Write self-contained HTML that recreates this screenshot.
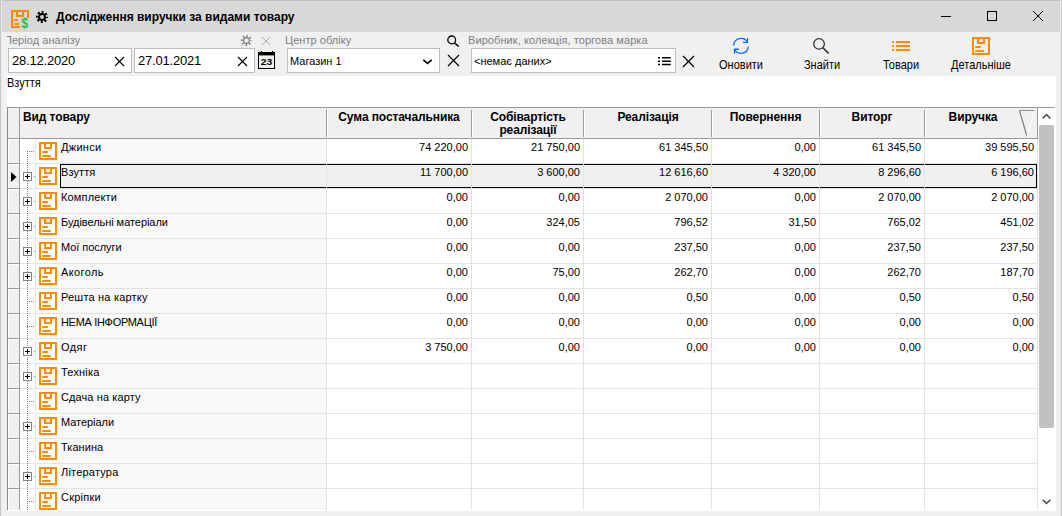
<!DOCTYPE html>
<html lang="uk"><head><meta charset="utf-8"><title>Дослідження виручки за видами товару</title>
<style>
*{box-sizing:border-box;margin:0;padding:0}
html,body{width:1062px;height:516px;overflow:hidden;background:#f0f0f0;font-family:"Liberation Sans",sans-serif;color:#000;font-size:11px}
div,span,svg{position:absolute}
#title{left:0;top:0;width:1062px;height:32px;background:#d8d8d8;border-top:1px solid #c2c2c2}
.eb{top:0;width:1px;height:516px}
#title .t{left:56px;top:9px;font:bold 12px "Liberation Sans",sans-serif;white-space:nowrap}
.lbl{font-size:11px;color:#7f7f7f;white-space:nowrap;top:34px;letter-spacing:.05px}
.inp{top:48px;height:25px;background:#fff;border:1px solid #bebebe}
.inp span{left:3px;top:4px;font-size:13px;white-space:nowrap;letter-spacing:-.2px}
.inp span.s{left:2px;top:6px;font-size:11px;letter-spacing:0}
.btn{top:59px;font-size:11px;white-space:nowrap;transform:translateX(-50%) scaleY(1.12)}
#panel{left:7px;top:76px;width:1049px;height:435px;background:#fff}
#cur{left:7px;top:77px;font-size:11px;transform:scaleY(1.12);transform-origin:0 50%}
#grid{left:7px;top:107px;width:1031px;height:403px;overflow:hidden;background:#fff}
#gt{left:7px;top:107px;width:1048px;height:1px;background:#9a9a9a}
#clip{left:0;top:0;width:1062px;height:510px;overflow:hidden}
#gl{left:7px;top:107px;width:1px;height:403px;background:#8c8c8c}
#hdr{left:8px;top:108px;width:1030px;height:31px;background:#f0f0f0;border-bottom:1px solid #9a9a9a;border-right:1px solid #9a9a9a}
.hc{top:111px;font:bold 12px "Liberation Sans",sans-serif;text-align:center;line-height:13px;letter-spacing:-.1px;white-space:nowrap;transform:translateX(-50%)}
.hs{top:110px;width:2px;height:27px;border-left:1px solid #9a9a9a;border-right:1px solid #fff}
.ind{left:8px;width:11px;height:24px;background:#f0f0f0;border-left:1px solid #fff;border-top:1px solid #fff}
.il{left:8px;width:11px;height:1px;background:#9a9a9a}
#is{left:19px;top:108px;width:1px;height:402px;background:#9a9a9a}
.c0{left:60px;width:266px;height:24px;background:#f8f8f8}
.rl{left:20px;width:1017px;height:1px;background:#e3e3e3}
.vl{top:139px;width:1px;height:371px;background:#e3e3e3}
.nm{left:61px;white-space:nowrap;font-size:11px;line-height:13px;letter-spacing:-.1px}
.v{white-space:nowrap;font-size:11px;text-align:right;line-height:13px}
.ic{left:39px}
.ex{left:23px;width:9px;height:9px;border:1px solid #848484;background:#fff}
.ex i{position:absolute;left:1px;top:3px;width:5px;height:1px;background:#000}
.ex b{position:absolute;left:3px;top:1px;width:1px;height:5px;background:#000}
.dv{left:27px;width:1px;background:repeating-linear-gradient(to bottom,#808080 0 1px,transparent 1px 2px)}
.dh{height:1px;background:repeating-linear-gradient(to right,#808080 0 1px,transparent 1px 2px)}
#sel{left:60px;top:164px;width:977px;height:24px;background:#f0f0f0;border:1px solid #000}
#sb{left:1038px;top:108px;width:18px;height:403px;background:#fff}
#th{left:1039px;top:125px;width:15px;height:303px;background:#c1c1c1;border-radius:2px}
</style></head><body>
<div id="title"><span class="t">Дослідження виручки за видами товару</span></div>
<div class="eb" style="left:0;background:#c6c6c6"></div><div class="eb" style="left:1px;background:#ebebeb"></div><div class="eb" style="left:1060px;background:#ebebeb"></div><div class="eb" style="left:1061px;background:#c6c6c6"></div>
<svg style="left:11px;top:10px;overflow:visible" width="18" height="20" viewBox="0 0 18 20"><path d="M17 8V1H1V17H9" fill="none" stroke="#ff8c00" stroke-width="2"/><path d="M6 2v4h6V2" fill="none" stroke="#ff8c00" stroke-width="2"/><path d="M3.5 10h3.5M3.5 14h4.5" stroke="#ff8c00" stroke-width="2" fill="none"/><text transform="translate(10.2 17.7) scale(.95 1.1)" font-family="Liberation Sans, sans-serif" font-weight="bold" font-size="13" fill="#1ec24b">$</text></svg>
<svg style="left:35px;top:10px" width="14" height="14" viewBox="-7 -7 14 14"><circle r="2.95" fill="none" stroke="#000" stroke-width="2"/><circle r="4.9" fill="none" stroke="#000" stroke-width="2.4" stroke-dasharray="1.9 1.948" stroke-dashoffset="0.95"/></svg>
<svg style="left:941px;top:11px" width="102" height="11" viewBox="0 0 102 11"><path d="M0 5.5h10" stroke="#000" stroke-width="1"/><rect x="46.5" y="0.5" width="9" height="9" fill="none" stroke="#000" stroke-width="1"/><path d="M92 0l10 10M102 0l-10 10" stroke="#000" stroke-width="1"/></svg>
<div style="left:7px;top:32px;width:90px;height:16px;overflow:hidden"><span class="lbl" style="left:-3px;top:2px">Період аналізу</span></div>
<span class="lbl" style="left:285px">Центр обліку</span>
<span class="lbl" style="left:468px;letter-spacing:.08px">Виробник, колекція, торгова марка</span>
<div class="inp" style="left:8px;width:124px"><span>28.12.2020</span></div>
<div class="inp" style="left:134px;width:121px"><span>27.01.2021</span></div>
<div class="inp" style="left:287px;width:153px"><span class="s">Магазин 1</span></div>
<div class="inp" style="left:471px;width:205px"><span class="s">&lt;немає даних&gt;</span></div>
<svg style="left:240px;top:34px" width="13" height="13" viewBox="-6.5 -6.5 13 13"><circle r="2.9" fill="none" stroke="#7a7a7a" stroke-width="1.1"/><circle r="4.6" fill="none" stroke="#7a7a7a" stroke-width="2" stroke-dasharray="1.4 2.213" stroke-dashoffset="0.7"/></svg>
<svg style="left:261px;top:36px" width="10" height="10" viewBox="-5 -5 10 10"><path d="M-4 -4L4 4M4 -4L-4 4" stroke="#a8a8a8" stroke-width="1" fill="none"/></svg>
<svg style="left:114.0px;top:56.0px" width="11.0" height="11.0" viewBox="-5.5 -5.5 11.0 11.0"><path d="M-4.5 -4.5L4.5 4.5M4.5 -4.5L-4.5 4.5" stroke="#000" stroke-width="1.1" fill="none"/></svg>
<svg style="left:237.0px;top:56.0px" width="11.0" height="11.0" viewBox="-5.5 -5.5 11.0 11.0"><path d="M-4.5 -4.5L4.5 4.5M4.5 -4.5L-4.5 4.5" stroke="#000" stroke-width="1.1" fill="none"/></svg>
<svg style="left:258px;top:50px" width="18" height="20" viewBox="0 0 18 20"><rect x="0.5" y="2.5" width="16" height="16" fill="#f0f0f0" stroke="#000" stroke-width="1"/><rect x="0" y="2" width="17" height="3.4" fill="#000"/><rect x="3" y="1" width="1" height="1" fill="#000"/><rect x="14" y="1" width="1" height="1" fill="#000"/><text x="8.4" y="15" text-anchor="middle" font-family="Liberation Sans, sans-serif" font-weight="bold" font-size="9.5" textLength="11.5" lengthAdjust="spacingAndGlyphs" fill="#000">23</text></svg>
<svg style="left:422px;top:58px" width="11" height="8" viewBox="0 0 11 8"><path d="M1.3 1.8L5.5 5.3L9.7 1.8" fill="none" stroke="#000" stroke-width="1.7"/></svg>
<svg style="left:445px;top:34px" width="16" height="15" viewBox="0 0 16 15"><circle cx="6.7" cy="5.9" r="3.9" fill="none" stroke="#000" stroke-width="1.3"/><path d="M9.6 8.9L13.7 12.5" stroke="#000" stroke-width="1.5"/></svg>
<svg style="left:446.5px;top:54.0px" width="13.0" height="13.0" viewBox="-6.5 -6.5 13.0 13.0"><path d="M-5.5 -5.5L5.5 5.5M5.5 -5.5L-5.5 5.5" stroke="#000" stroke-width="1.2" fill="none"/></svg>
<svg style="left:682.0px;top:55.0px" width="13.0" height="13.0" viewBox="-6.5 -6.5 13.0 13.0"><path d="M-5.5 -5.5L5.5 5.5M5.5 -5.5L-5.5 5.5" stroke="#000" stroke-width="1.2" fill="none"/></svg>
<svg style="left:657px;top:56px" width="15" height="11" viewBox="0 0 15 11"><path d="M1 1.8h2M5 1.8h8.8M1 5.2h2M5 5.2h8.8M1 8.6h2M5 8.6h8.8" stroke="#000" stroke-width="1.5" fill="none"/></svg>
<svg style="left:732px;top:37px" width="18" height="18" viewBox="0 0 18 18"><g fill="none" stroke="#0d6efd" stroke-width="1.3"><path d="M1.65 8.6A7.35 7.35 0 0 1 15.5 5.3"/><path d="M15.5 0.9V5.35H11"/><path d="M16.35 9.6A7.35 7.35 0 0 1 2.5 12.3"/><path d="M2.5 16.7V12.25H7"/></g></svg>
<svg style="left:811px;top:37px" width="20" height="19" viewBox="0 0 20 19"><circle cx="8.05" cy="6.9" r="5.3" fill="none" stroke="#333" stroke-width="1.3"/><path d="M11.9 10.8L17.6 16.4" stroke="#333" stroke-width="1.6"/></svg>
<svg style="left:891px;top:40px" width="20" height="12" viewBox="0 0 20 12"><path d="M1 2h2M5 2h14M1 6h2M5 6h14M1 10h2M5 10h14" stroke="#ff8c00" stroke-width="2" fill="none"/></svg>
<svg style="left:972px;top:37px" width="18" height="18" viewBox="0 0 18 18"><rect x="1" y="1" width="16" height="16" fill="none" stroke="#ff8c00" stroke-width="2"/><path d="M6 2v4h6V2" fill="none" stroke="#ff8c00" stroke-width="2"/><path d="M3.2 10h5.6M3.2 14h8.6" stroke="#ff8c00" stroke-width="2"/></svg>
<span class="btn" style="left:741px">Оновити</span>
<span class="btn" style="left:822px">Знайти</span>
<span class="btn" style="left:901px">Товари</span>
<span class="btn" style="left:981px">Детальніше</span>
<div id="panel"></div><span id="cur">Взуття</span>
<div id="clip">
<div id="grid"></div>
<div id="hdr"></div><div id="gt"></div>
<span class="hc" style="left:23px;transform:none">Вид товару</span>
<span class="hc" style="left:399px">Сума постачальника</span>
<span class="hc" style="left:528px">Собівартість<br>реалізації</span>
<span class="hc" style="left:648px">Реалізація</span>
<span class="hc" style="left:765.5px">Повернення</span>
<span class="hc" style="left:872px">Виторг</span>
<span class="hc" style="left:973px">Виручка</span>
<div class="hs" style="left:326px"></div>
<div class="hs" style="left:471px"></div>
<div class="hs" style="left:583px"></div>
<div class="hs" style="left:711px"></div>
<div class="hs" style="left:819px"></div>
<div class="hs" style="left:924px"></div>
<div class="ind" style="top:139px"></div><div class="il" style="top:163px"></div>
<div class="c0" style="top:139px"></div>
<div class="rl" style="top:163px"></div>
<div class="ind" style="top:164px"></div><div class="il" style="top:188px"></div>
<div class="c0" style="top:164px"></div>
<div class="rl" style="top:188px"></div>
<div class="ind" style="top:189px"></div><div class="il" style="top:213px"></div>
<div class="c0" style="top:189px"></div>
<div class="rl" style="top:213px"></div>
<div class="ind" style="top:214px"></div><div class="il" style="top:238px"></div>
<div class="c0" style="top:214px"></div>
<div class="rl" style="top:238px"></div>
<div class="ind" style="top:239px"></div><div class="il" style="top:263px"></div>
<div class="c0" style="top:239px"></div>
<div class="rl" style="top:263px"></div>
<div class="ind" style="top:264px"></div><div class="il" style="top:288px"></div>
<div class="c0" style="top:264px"></div>
<div class="rl" style="top:288px"></div>
<div class="ind" style="top:289px"></div><div class="il" style="top:313px"></div>
<div class="c0" style="top:289px"></div>
<div class="rl" style="top:313px"></div>
<div class="ind" style="top:314px"></div><div class="il" style="top:338px"></div>
<div class="c0" style="top:314px"></div>
<div class="rl" style="top:338px"></div>
<div class="ind" style="top:339px"></div><div class="il" style="top:363px"></div>
<div class="c0" style="top:339px"></div>
<div class="rl" style="top:363px"></div>
<div class="ind" style="top:364px"></div><div class="il" style="top:388px"></div>
<div class="c0" style="top:364px"></div>
<div class="rl" style="top:388px"></div>
<div class="ind" style="top:389px"></div><div class="il" style="top:413px"></div>
<div class="c0" style="top:389px"></div>
<div class="rl" style="top:413px"></div>
<div class="ind" style="top:414px"></div><div class="il" style="top:438px"></div>
<div class="c0" style="top:414px"></div>
<div class="rl" style="top:438px"></div>
<div class="ind" style="top:439px"></div><div class="il" style="top:463px"></div>
<div class="c0" style="top:439px"></div>
<div class="rl" style="top:463px"></div>
<div class="ind" style="top:464px"></div><div class="il" style="top:488px"></div>
<div class="c0" style="top:464px"></div>
<div class="rl" style="top:488px"></div>
<div class="ind" style="top:489px"></div><div class="il" style="top:513px"></div>
<div class="c0" style="top:489px"></div>
<div class="rl" style="top:513px"></div>
<div id="sel"></div>
<div class="vl" style="left:35px;background:#e8e8e8"></div>
<div class="vl" style="left:326px"></div>
<div class="vl" style="left:471px"></div>
<div class="vl" style="left:583px"></div>
<div class="vl" style="left:711px"></div>
<div class="vl" style="left:819px"></div>
<div class="vl" style="left:924px"></div>
<div class="vl" style="left:1037px"></div>
<div class="dv" style="top:151px;height:359px"></div>
<div class="dh" style="left:27px;top:151px;width:8px"></div>
<svg class="ic" style="top:142px" width="18" height="18" viewBox="0 0 18 18"><rect x="1" y="1" width="16" height="16" fill="none" stroke="#ff8c00" stroke-width="2"/><path d="M6 2v4h6V2" fill="none" stroke="#ff8c00" stroke-width="2"/><path d="M3.2 10h5.6M3.2 14h8.6" stroke="#ff8c00" stroke-width="2"/></svg>
<span class="nm" style="top:141px;letter-spacing:0.3px">Джинси</span>
<span class="v" style="right:594px;top:141px">74 220,00</span>
<span class="v" style="right:482px;top:141px">21 750,00</span>
<span class="v" style="right:354px;top:141px">61 345,50</span>
<span class="v" style="right:246px;top:141px">0,00</span>
<span class="v" style="right:141px;top:141px">61 345,50</span>
<span class="v" style="right:28px;top:141px">39 595,50</span>
<div class="dh" style="left:34px;top:176px;width:1px"></div>
<div class="ex" style="top:172px"><i></i><b></b></div>
<svg class="ic" style="top:167px" width="18" height="18" viewBox="0 0 18 18"><rect x="1" y="1" width="16" height="16" fill="none" stroke="#ff8c00" stroke-width="2"/><path d="M6 2v4h6V2" fill="none" stroke="#ff8c00" stroke-width="2"/><path d="M3.2 10h5.6M3.2 14h8.6" stroke="#ff8c00" stroke-width="2"/></svg>
<span class="nm" style="top:166px;letter-spacing:0.1px">Взуття</span>
<span class="v" style="right:594px;top:166px">11 700,00</span>
<span class="v" style="right:482px;top:166px">3 600,00</span>
<span class="v" style="right:354px;top:166px">12 616,60</span>
<span class="v" style="right:246px;top:166px">4 320,00</span>
<span class="v" style="right:141px;top:166px">8 296,60</span>
<span class="v" style="right:28px;top:166px">6 196,60</span>
<div class="dh" style="left:34px;top:201px;width:1px"></div>
<div class="ex" style="top:197px"><i></i><b></b></div>
<svg class="ic" style="top:192px" width="18" height="18" viewBox="0 0 18 18"><rect x="1" y="1" width="16" height="16" fill="none" stroke="#ff8c00" stroke-width="2"/><path d="M6 2v4h6V2" fill="none" stroke="#ff8c00" stroke-width="2"/><path d="M3.2 10h5.6M3.2 14h8.6" stroke="#ff8c00" stroke-width="2"/></svg>
<span class="nm" style="top:191px;letter-spacing:0.15px">Комплекти</span>
<span class="v" style="right:594px;top:191px">0,00</span>
<span class="v" style="right:482px;top:191px">0,00</span>
<span class="v" style="right:354px;top:191px">2 070,00</span>
<span class="v" style="right:246px;top:191px">0,00</span>
<span class="v" style="right:141px;top:191px">2 070,00</span>
<span class="v" style="right:28px;top:191px">2 070,00</span>
<div class="dh" style="left:34px;top:226px;width:1px"></div>
<div class="ex" style="top:222px"><i></i><b></b></div>
<svg class="ic" style="top:217px" width="18" height="18" viewBox="0 0 18 18"><rect x="1" y="1" width="16" height="16" fill="none" stroke="#ff8c00" stroke-width="2"/><path d="M6 2v4h6V2" fill="none" stroke="#ff8c00" stroke-width="2"/><path d="M3.2 10h5.6M3.2 14h8.6" stroke="#ff8c00" stroke-width="2"/></svg>
<span class="nm" style="top:216px;letter-spacing:-0.05px">Будівельні матеріали</span>
<span class="v" style="right:594px;top:216px">0,00</span>
<span class="v" style="right:482px;top:216px">324,05</span>
<span class="v" style="right:354px;top:216px">796,52</span>
<span class="v" style="right:246px;top:216px">31,50</span>
<span class="v" style="right:141px;top:216px">765,02</span>
<span class="v" style="right:28px;top:216px">451,02</span>
<div class="dh" style="left:34px;top:251px;width:1px"></div>
<div class="ex" style="top:247px"><i></i><b></b></div>
<svg class="ic" style="top:242px" width="18" height="18" viewBox="0 0 18 18"><rect x="1" y="1" width="16" height="16" fill="none" stroke="#ff8c00" stroke-width="2"/><path d="M6 2v4h6V2" fill="none" stroke="#ff8c00" stroke-width="2"/><path d="M3.2 10h5.6M3.2 14h8.6" stroke="#ff8c00" stroke-width="2"/></svg>
<span class="nm" style="top:241px;letter-spacing:-0.05px">Мої послуги</span>
<span class="v" style="right:594px;top:241px">0,00</span>
<span class="v" style="right:482px;top:241px">0,00</span>
<span class="v" style="right:354px;top:241px">237,50</span>
<span class="v" style="right:246px;top:241px">0,00</span>
<span class="v" style="right:141px;top:241px">237,50</span>
<span class="v" style="right:28px;top:241px">237,50</span>
<div class="dh" style="left:34px;top:276px;width:1px"></div>
<div class="ex" style="top:272px"><i></i><b></b></div>
<svg class="ic" style="top:267px" width="18" height="18" viewBox="0 0 18 18"><rect x="1" y="1" width="16" height="16" fill="none" stroke="#ff8c00" stroke-width="2"/><path d="M6 2v4h6V2" fill="none" stroke="#ff8c00" stroke-width="2"/><path d="M3.2 10h5.6M3.2 14h8.6" stroke="#ff8c00" stroke-width="2"/></svg>
<span class="nm" style="top:266px;letter-spacing:0.4px">Акоголь</span>
<span class="v" style="right:594px;top:266px">0,00</span>
<span class="v" style="right:482px;top:266px">75,00</span>
<span class="v" style="right:354px;top:266px">262,70</span>
<span class="v" style="right:246px;top:266px">0,00</span>
<span class="v" style="right:141px;top:266px">262,70</span>
<span class="v" style="right:28px;top:266px">187,70</span>
<div class="dh" style="left:27px;top:301px;width:8px"></div>
<svg class="ic" style="top:292px" width="18" height="18" viewBox="0 0 18 18"><rect x="1" y="1" width="16" height="16" fill="none" stroke="#ff8c00" stroke-width="2"/><path d="M6 2v4h6V2" fill="none" stroke="#ff8c00" stroke-width="2"/><path d="M3.2 10h5.6M3.2 14h8.6" stroke="#ff8c00" stroke-width="2"/></svg>
<span class="nm" style="top:291px;letter-spacing:0.2px">Решта на картку</span>
<span class="v" style="right:594px;top:291px">0,00</span>
<span class="v" style="right:482px;top:291px">0,00</span>
<span class="v" style="right:354px;top:291px">0,50</span>
<span class="v" style="right:246px;top:291px">0,00</span>
<span class="v" style="right:141px;top:291px">0,50</span>
<span class="v" style="right:28px;top:291px">0,50</span>
<div class="dh" style="left:27px;top:326px;width:8px"></div>
<svg class="ic" style="top:317px" width="18" height="18" viewBox="0 0 18 18"><rect x="1" y="1" width="16" height="16" fill="none" stroke="#ff8c00" stroke-width="2"/><path d="M6 2v4h6V2" fill="none" stroke="#ff8c00" stroke-width="2"/><path d="M3.2 10h5.6M3.2 14h8.6" stroke="#ff8c00" stroke-width="2"/></svg>
<span class="nm" style="top:316px;letter-spacing:-0.32px">НЕМА ІНФОРМАЦІЇ</span>
<span class="v" style="right:594px;top:316px">0,00</span>
<span class="v" style="right:482px;top:316px">0,00</span>
<span class="v" style="right:354px;top:316px">0,00</span>
<span class="v" style="right:246px;top:316px">0,00</span>
<span class="v" style="right:141px;top:316px">0,00</span>
<span class="v" style="right:28px;top:316px">0,00</span>
<div class="dh" style="left:34px;top:351px;width:1px"></div>
<div class="ex" style="top:347px"><i></i><b></b></div>
<svg class="ic" style="top:342px" width="18" height="18" viewBox="0 0 18 18"><rect x="1" y="1" width="16" height="16" fill="none" stroke="#ff8c00" stroke-width="2"/><path d="M6 2v4h6V2" fill="none" stroke="#ff8c00" stroke-width="2"/><path d="M3.2 10h5.6M3.2 14h8.6" stroke="#ff8c00" stroke-width="2"/></svg>
<span class="nm" style="top:341px;letter-spacing:0.4px">Одяг</span>
<span class="v" style="right:594px;top:341px">3 750,00</span>
<span class="v" style="right:482px;top:341px">0,00</span>
<span class="v" style="right:354px;top:341px">0,00</span>
<span class="v" style="right:246px;top:341px">0,00</span>
<span class="v" style="right:141px;top:341px">0,00</span>
<span class="v" style="right:28px;top:341px">0,00</span>
<div class="dh" style="left:34px;top:376px;width:1px"></div>
<div class="ex" style="top:372px"><i></i><b></b></div>
<svg class="ic" style="top:367px" width="18" height="18" viewBox="0 0 18 18"><rect x="1" y="1" width="16" height="16" fill="none" stroke="#ff8c00" stroke-width="2"/><path d="M6 2v4h6V2" fill="none" stroke="#ff8c00" stroke-width="2"/><path d="M3.2 10h5.6M3.2 14h8.6" stroke="#ff8c00" stroke-width="2"/></svg>
<span class="nm" style="top:366px;letter-spacing:0.2px">Техніка</span>
<div class="dh" style="left:27px;top:401px;width:8px"></div>
<svg class="ic" style="top:392px" width="18" height="18" viewBox="0 0 18 18"><rect x="1" y="1" width="16" height="16" fill="none" stroke="#ff8c00" stroke-width="2"/><path d="M6 2v4h6V2" fill="none" stroke="#ff8c00" stroke-width="2"/><path d="M3.2 10h5.6M3.2 14h8.6" stroke="#ff8c00" stroke-width="2"/></svg>
<span class="nm" style="top:391px;letter-spacing:0.1px">Сдача на карту</span>
<div class="dh" style="left:34px;top:426px;width:1px"></div>
<div class="ex" style="top:422px"><i></i><b></b></div>
<svg class="ic" style="top:417px" width="18" height="18" viewBox="0 0 18 18"><rect x="1" y="1" width="16" height="16" fill="none" stroke="#ff8c00" stroke-width="2"/><path d="M6 2v4h6V2" fill="none" stroke="#ff8c00" stroke-width="2"/><path d="M3.2 10h5.6M3.2 14h8.6" stroke="#ff8c00" stroke-width="2"/></svg>
<span class="nm" style="top:416px;letter-spacing:-0.05px">Матеріали</span>
<div class="dh" style="left:27px;top:451px;width:8px"></div>
<svg class="ic" style="top:442px" width="18" height="18" viewBox="0 0 18 18"><rect x="1" y="1" width="16" height="16" fill="none" stroke="#ff8c00" stroke-width="2"/><path d="M6 2v4h6V2" fill="none" stroke="#ff8c00" stroke-width="2"/><path d="M3.2 10h5.6M3.2 14h8.6" stroke="#ff8c00" stroke-width="2"/></svg>
<span class="nm" style="top:441px;letter-spacing:0.05px">Тканина</span>
<div class="dh" style="left:34px;top:476px;width:1px"></div>
<div class="ex" style="top:472px"><i></i><b></b></div>
<svg class="ic" style="top:467px" width="18" height="18" viewBox="0 0 18 18"><rect x="1" y="1" width="16" height="16" fill="none" stroke="#ff8c00" stroke-width="2"/><path d="M6 2v4h6V2" fill="none" stroke="#ff8c00" stroke-width="2"/><path d="M3.2 10h5.6M3.2 14h8.6" stroke="#ff8c00" stroke-width="2"/></svg>
<span class="nm" style="top:466px;letter-spacing:0.2px">Література</span>
<div class="dh" style="left:27px;top:501px;width:8px"></div>
<svg class="ic" style="top:492px" width="18" height="18" viewBox="0 0 18 18"><rect x="1" y="1" width="16" height="16" fill="none" stroke="#ff8c00" stroke-width="2"/><path d="M6 2v4h6V2" fill="none" stroke="#ff8c00" stroke-width="2"/><path d="M3.2 10h5.6M3.2 14h8.6" stroke="#ff8c00" stroke-width="2"/></svg>
<span class="nm" style="top:491px;letter-spacing:0.25px">Скріпки</span>
<div id="is"></div><div id="gl"></div>
<svg style="left:11px;top:172px" width="6" height="10"><path d="M0 0L5.5 5L0 10z" fill="#000"/></svg>
</div>
<div id="sb"></div><div id="th"></div>
<svg style="left:1041px;top:113px" width="12" height="8" viewBox="0 0 12 8"><path d="M1.7 5.4L5.5 1.7L9.3 5.4" fill="none" stroke="#555" stroke-width="1.6"/></svg><svg style="left:1041px;top:498px" width="12" height="8" viewBox="0 0 12 8"><path d="M1.7 1.9L5.5 5.4L9.3 1.9" fill="none" stroke="#555" stroke-width="1.6"/></svg>
<svg style="left:1018px;top:110px" width="18" height="27" viewBox="0 0 18 27"><path d="M1.5 0.5H16.5" stroke="#8e8e8e"/><path d="M1.5 0.5L8.7 25.5" stroke="#808080" stroke-width="1.2" fill="none"/><path d="M16.5 1L9.3 25.5" stroke="#fff" fill="none"/></svg>
</body></html>
